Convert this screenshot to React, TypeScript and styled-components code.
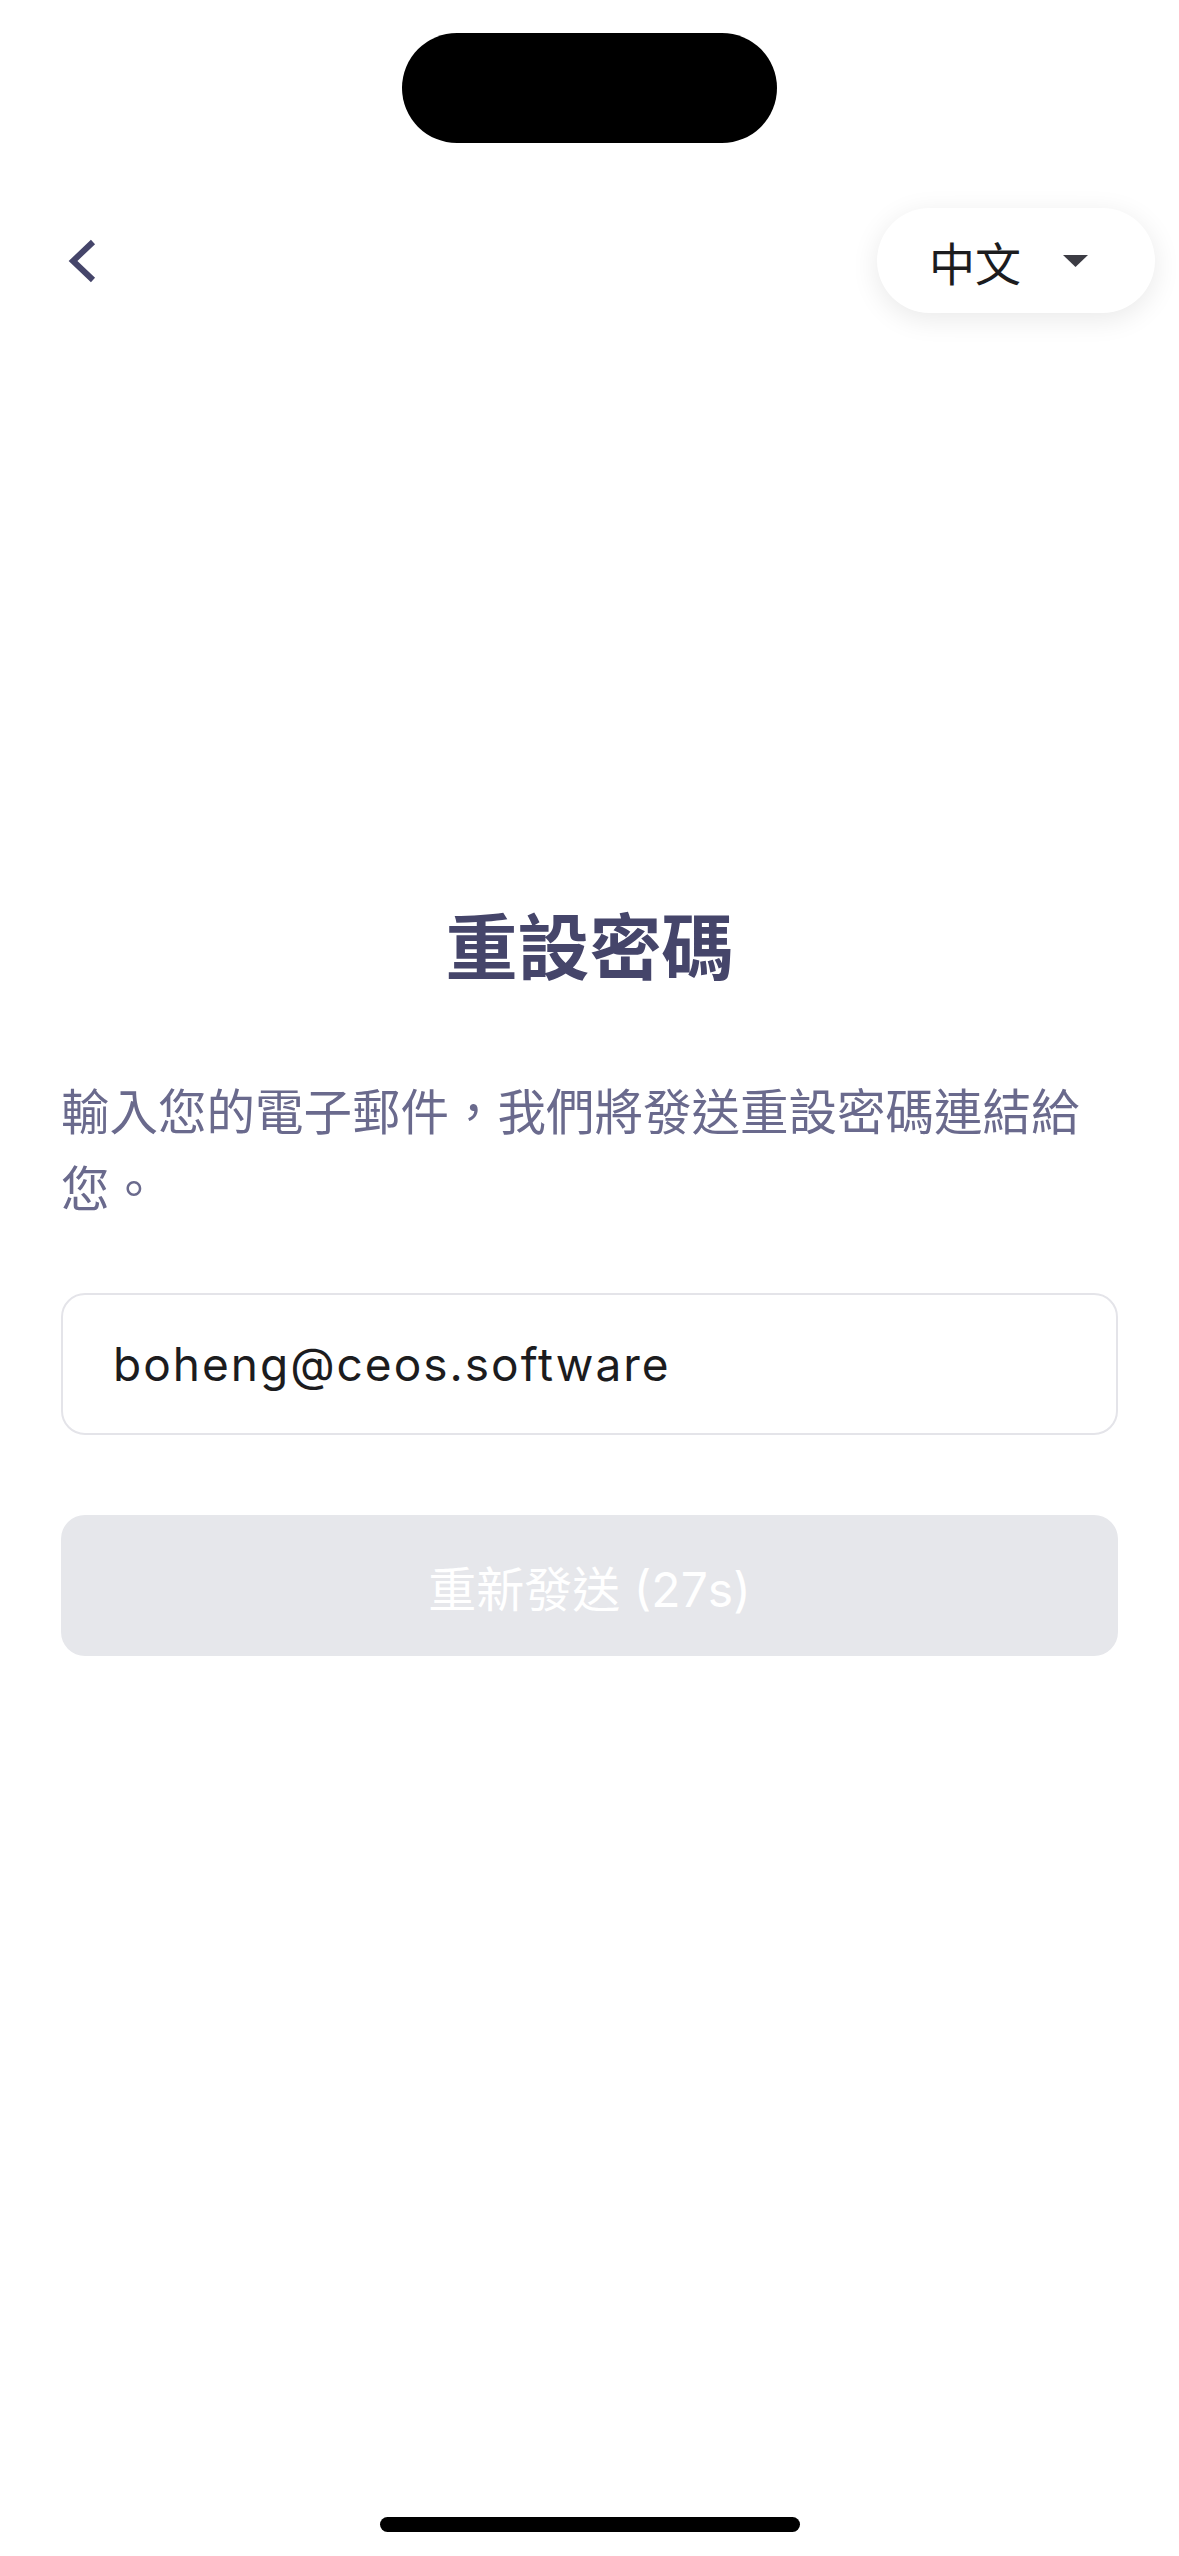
import React from "react";
import styled, { createGlobalStyle } from "styled-components";

const GlobalStyle = createGlobalStyle`
  html, body {
    margin: 0;
    padding: 0;
    background: #ffffff;
  }
  body {
    font-family: Inter, "Noto Sans CJK TC", "Noto Sans", sans-serif;
    -webkit-font-smoothing: antialiased;
  }
  * { box-sizing: border-box; }
`;

const Screen = styled.div`
  position: relative;
  width: 1179px;
  min-height: 2556px;
  display: flex;
  flex-direction: column;
  background: #ffffff;
`;

const StatusArea = styled.div`
  display: flex;
  justify-content: center;
  padding-top: 33px;
`;

const Island = styled.div`
  width: 375px;
  height: 110px;
  border-radius: 55px;
  background: #000000;
`;

const Header = styled.header`
  display: flex;
  align-items: center;
  justify-content: space-between;
  margin-top: 65px;
  height: 105px;
  padding: 0 24px 0 66px;
`;

const BackButton = styled.button`
  display: flex;
  align-items: center;
  justify-content: center;
  width: 34px;
  height: 50px;
  padding: 0;
  border: none;
  background: transparent;
  cursor: pointer;
`;

const LangPill = styled.button`
  display: flex;
  align-items: center;
  height: 105px;
  width: 278px;
  padding: 0 0 0 52px;
  border: none;
  border-radius: 53px;
  background: #ffffff;
  box-shadow: 0 6px 28px rgba(0, 0, 0, 0.09);
  cursor: pointer;
`;

const LangLabel = styled.span`
  font-family: "Noto Sans CJK TC", sans-serif;
  font-size: 46px;
  line-height: 1;
  color: #1c1c1e;
`;

const Caret = styled.svg`
  margin-left: 42px;
  width: 25px;
  height: 12px;
`;

const Content = styled.main`
  display: flex;
  flex-direction: column;
  padding: 0 61px;
  margin-top: 587px;
`;

const Title = styled.h1`
  margin: 0;
  font-family: "Noto Sans CJK TC", sans-serif;
  font-size: 72px;
  line-height: 86px;
  font-weight: 700;
  color: #45456a;
  text-align: center;
`;

const Description = styled.p`
  margin: 85px 0 0;
  font-family: "Noto Sans CJK TC", sans-serif;
  font-size: 48.5px;
  line-height: 77px;
  font-weight: 400;
  color: #6a6a8d;
`;

const EmailField = styled.div`
  display: flex;
  align-items: center;
  margin-top: 68px;
  height: 142px;
  padding: 0 50px;
  border: 2px solid #e4e4e9;
  border-radius: 24px;
  background: #ffffff;
`;

const EmailText = styled.span`
  font-family: Inter, "Noto Sans", sans-serif;
  font-size: 46px;
  letter-spacing: 2px;
  color: #1c1c1e;
`;

const ResendButton = styled.button`
  display: flex;
  align-items: center;
  justify-content: center;
  margin-top: 80px;
  height: 141px;
  width: 100%;
  border: none;
  border-radius: 24px;
  background: #e6e7eb;
  font-family: Inter, "Noto Sans CJK TC", sans-serif;
  font-size: 48px;
  color: #ffffff;
`;

const HomeBar = styled.div`
  display: flex;
  justify-content: center;
  margin-top: auto;
  padding-bottom: 24px;
`;

const HomeIndicator = styled.div`
  width: 420px;
  height: 15px;
  border-radius: 8px;
  background: #000000;
`;

export default function App() {
  return (
    <>
      <GlobalStyle />
      <Screen>
        <StatusArea>
          <Island />
        </StatusArea>
        <Header>
          <BackButton aria-label="back">
            <svg width="34" height="50" viewBox="0 0 34 50">
              <polyline
                points="27,6 7,25 27,44"
                fill="none"
                stroke="#45456a"
                strokeWidth="6"
                strokeLinecap="butt"
                strokeLinejoin="miter"
              />
            </svg>
          </BackButton>
          <LangPill>
            <LangLabel>中文</LangLabel>
            <Caret viewBox="0 0 25 12">
              <polygon points="0,0 25,0 12.5,12" fill="#3c3c44" />
            </Caret>
          </LangPill>
        </Header>
        <Content>
          <Title>重設密碼</Title>
          <Description>輸入您的電子郵件，我們將發送重設密碼連結給您。</Description>
          <EmailField>
            <EmailText>boheng@ceos.software</EmailText>
          </EmailField>
          <ResendButton disabled>重新發送 (27s)</ResendButton>
        </Content>
        <HomeBar>
          <HomeIndicator />
        </HomeBar>
      </Screen>
    </>
  );
}
